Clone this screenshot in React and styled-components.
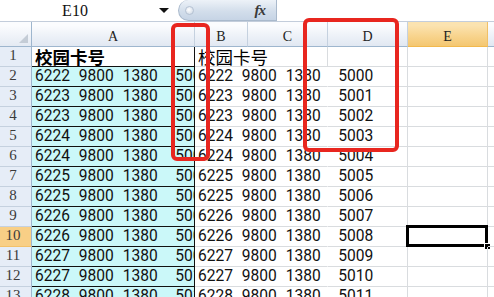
import React from "react";
import styled, { createGlobalStyle } from "styled-components";

const GlobalStyle = createGlobalStyle`
  html, body { margin: 0; padding: 0; background: #fff; }
  body { width: 494px; height: 297px; overflow: hidden; }
`;

const Page = styled.div`
  position: relative;
  width: 494px;
  height: 297px;
  overflow: hidden;
  background: #fff;
`;

const Toolbar = styled.div`
  display: flex;
  align-items: stretch;
  height: 21px;
  border-bottom: 1px solid #c3cddb;
  background: #fff;
`;

const NameBox = styled.div`
  width: 150px;
  display: flex;
  align-items: center;
  justify-content: center;
  font-family: "Liberation Serif", serif;
  font-size: 16px;
  color: #111;
`;

const DropArrow = styled.div`
  width: 28px;
  display: flex;
  align-items: center;
  justify-content: center;
  &::before {
    content: "";
    border-left: 5px solid transparent;
    border-right: 5px solid transparent;
    border-top: 5px solid #111;
  }
`;

const FormulaPill = styled.div`
  width: 99px;
  display: flex;
  align-items: center;
  justify-content: space-between;
  padding: 0 11px 0 6px;
  box-sizing: border-box;
  border: 1px solid #a9b9cc;
  border-top: none;
  border-radius: 12px 0 0 12px;
  background: linear-gradient(#edf2f8, #d3deeb 55%, #c6d4e5);
`;

const Knob = styled.span`
  width: 7px;
  height: 7px;
  border-radius: 50%;
  background: radial-gradient(circle at 40% 40%, #ffffff, #c9d4e2);
  border: 1px solid #b5c2d3;
`;

const Fx = styled.span`
  font-family: "Liberation Serif", serif;
  font-style: italic;
  font-weight: 700;
  font-size: 15px;
  color: #3a3a3a;
  letter-spacing: -1px;
`;

const Sheet = styled.div`
  display: grid;
  grid-template-columns: 32px 163px 53px 80px 80px 80px 40px;
  grid-template-rows: 25px repeat(13, 20px);
`;

const Corner = styled.div`
  box-sizing: border-box;
  display: flex;
  align-items: flex-end;
  justify-content: flex-end;
  padding: 0 3px 3px 0;
  border-right: 1px solid #9eb6ce;
  border-bottom: 1px solid #9eb6ce;
  background: linear-gradient(#fbfcfe 15%, #e4eaf3);
`;

const ColHeader = styled.div`
  box-sizing: border-box;
  display: flex;
  align-items: flex-end;
  justify-content: center;
  padding-bottom: 1px;
  font-family: "Liberation Serif", serif;
  font-size: 14px;
  color: #222;
  border-right: 1px solid ${(p) => (p.$active ? "#f0c067" : "#c5d1df")};
  border-bottom: 1px solid ${(p) => (p.$active ? "#f2b94e" : "#9eb6ce")};
  background: ${(p) =>
    p.$active
      ? "linear-gradient(#fbe3b0 15%, #f8d590 55%, #f4c771)"
      : "linear-gradient(#fbfcfe 15%, #eef2f8 55%, #e1e8f2)"};
`;

const RowHeader = styled.div`
  box-sizing: border-box;
  display: flex;
  align-items: flex-end;
  justify-content: center;
  padding: 0 5px 2px 0;
  font-family: "Liberation Serif", serif;
  font-size: 15px;
  color: #3a3a3a;
  border-right: 1px solid #9eb6ce;
  border-bottom: 1px solid ${(p) => (p.$active ? "#f2c16a" : "#c5d1df")};
  background: ${(p) => (p.$active ? "#f8cf86" : "#e6edf7")};
`;

const BoxedCell = styled.div`
  box-sizing: border-box;
  overflow: hidden;
  white-space: pre;
  padding-left: 3px;
  display: flex;
  align-items: flex-end;
  border-bottom: 1px solid #111;
  border-right: 1px solid #111;
  background: ${(p) => (p.$title ? "#fff" : "#cbf8f9")};
`;

const Cell = styled.div`
  position: relative;
  box-sizing: border-box;
  white-space: pre;
  padding-left: 3px;
  display: flex;
  align-items: flex-end;
  border-bottom: 1px solid #d9dcdf;
  border-right: 1px solid ${(p) => (p.$hideLine ? "transparent" : "#d9dcdf")};
  ${(p) =>
    p.$selected &&
    `
    &::before {
      content: "";
      position: absolute;
      left: -2px;
      top: -2px;
      right: -1px;
      bottom: -1px;
      border: 3px solid #000;
    }
    &::after {
      content: "";
      position: absolute;
      right: -4px;
      bottom: -4px;
      width: 5px;
      height: 5px;
      background: #000;
      border: 1px solid #fff;
    }
  `}
`;

const Digits = styled.span`
  font-family: Roboto, "Liberation Sans", sans-serif;
  font-variant-numeric: tabular-nums;
  font-size: 15.6px;
  word-spacing: 4.9px;
  line-height: 1;
  color: #111;
  margin-bottom: 1px;
`;

const Title = styled.span`
  font-family: "Noto Sans CJK SC", "Noto Sans", sans-serif;
  font-size: 17.5px;
  line-height: 1;
  color: #000;
  font-weight: ${(p) => (p.$bold ? 700 : 400)};
  margin-bottom: 1px;
`;

const RedBox = styled.div`
  position: absolute;
  left: ${(p) => p.$x}px;
  top: ${(p) => p.$y}px;
  width: ${(p) => p.$w}px;
  height: ${(p) => p.$h}px;
  box-sizing: border-box;
  border: 4px solid #e8261f;
  border-radius: 6px;
  pointer-events: none;
`;

const prefixes = [
  "6222", "6223", "6223", "6224", "6224", "6225",
  "6225", "6226", "6226", "6227", "6227", "6228",
];

const rows = prefixes.map((p, i) => `${p} 9800 1380  ${5000 + i}`);

const columns = ["A", "B", "C", "D", "E"];

export default function App() {
  return (
    <Page>
      <GlobalStyle />
      <Toolbar>
        <NameBox>E10</NameBox>
        <DropArrow />
        <FormulaPill>
          <Knob />
          <Fx>fx</Fx>
        </FormulaPill>
      </Toolbar>
      <Sheet>
        <Corner>
          <svg width="9" height="9" viewBox="0 0 9 9">
            <polygon points="9,0 9,9 0,9" fill="#c4ccd6" />
          </svg>
        </Corner>
        {columns.map((c) => (
          <ColHeader key={c} $active={c === "E"}>
            {c}
          </ColHeader>
        ))}
        <ColHeader />

        <RowHeader>1</RowHeader>
        <BoxedCell $title>
          <Title $bold>校园卡号</Title>
        </BoxedCell>
        <Cell $hideLine>
          <Title>校园卡号</Title>
        </Cell>
        <Cell />
        <Cell />
        <Cell />
        <Cell />

        {rows.map((text, i) => {
          const n = i + 2;
          return (
            <React.Fragment key={n}>
              <RowHeader $active={n === 10}>{n}</RowHeader>
              <BoxedCell>
                <Digits>{text}</Digits>
              </BoxedCell>
              <Cell $hideLine>
                <Digits>{text}</Digits>
              </Cell>
              <Cell $hideLine />
              <Cell />
              <Cell $selected={n === 10} />
              <Cell />
            </React.Fragment>
          );
        })}
      </Sheet>
      <RedBox $x={171} $y={23} $w={39} $h={138} />
      <RedBox $x={303} $y={18} $w={96} $h={134} />
    </Page>
  );
}
